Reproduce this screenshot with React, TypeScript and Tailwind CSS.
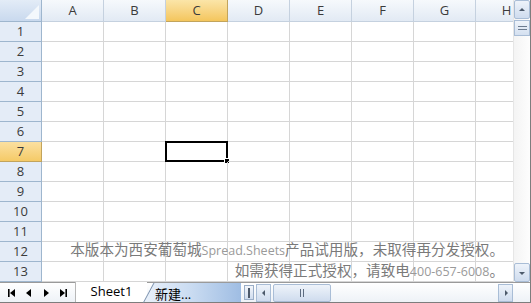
import React from "react";

const cols = ["A", "B", "C", "D", "E", "F", "G", "H"];
const rows = Array.from({ length: 13 }, (_, i) => i + 1);

const SEL_COL = 2;
const SEL_ROW = 7;

function ArrowBtn({ dir }: { dir: "up" | "down" | "left" | "right" }) {
  const pts: Record<string, string> = {
    up: "2,6 5,3 8,6",
    down: "2,4 5,7 8,4",
    left: "6,2 3,5 6,8",
    right: "4,2 7,5 4,8",
  };
  return (
    <svg width="10" height="10" viewBox="0 0 10 10">
      <polygon points={pts[dir]} fill="#4d5a6b" />
    </svg>
  );
}

export default function App() {
  return (
    <div
      className="relative w-[531px] h-[303px] overflow-hidden bg-white flex flex-col border-r border-[#7d7d7d]"
      style={{ fontFamily: '"Open Sans", "Noto Sans", sans-serif' }}
    >
      <div className="flex flex-1 min-h-0">
        {/* --- Grid --- */}
        <div className="w-[513px] overflow-hidden">
          <div className="grid grid-cols-[42px_repeat(8,62px)] grid-rows-[22px_repeat(13,20px)] w-max">
            {/* corner */}
            <div className="relative bg-gradient-to-b from-[#e3ecf7] to-[#c9d9ee] border-r border-b border-[#9eb6ce]">
              <svg className="absolute right-[2px] bottom-[2px]" width="14" height="14" viewBox="0 0 14 14">
                <polygon points="14,0 14,14 0,14" fill="#f4f8fc" />
              </svg>
            </div>
            {cols.map((c, i) => (
              <div
                key={c}
                className={
                  i === SEL_COL
                    ? "flex items-center justify-center text-[13px] text-[#3b3b3b] bg-gradient-to-b from-[#fbe5a8] to-[#f4c65c] border-r border-b border-[#c2a45c]"
                    : "flex items-center justify-center text-[13px] text-[#3b3b3b] bg-gradient-to-b from-[#f6f9fc] to-[#e2eaf4] border-r border-b border-[#c5d1df]"
                }
              >
                {c}
              </div>
            ))}
            {rows.map((r) => (
              <React.Fragment key={r}>
                <div
                  className={
                    r === SEL_ROW
                      ? "flex items-center justify-center text-[13px] text-[#3b3b3b] bg-gradient-to-b from-[#fbe0a0] to-[#f5ca66] border-r border-b border-[#c2a45c]"
                      : "flex items-center justify-center text-[13px] text-[#3b3b3b] bg-[#e4ecf7] border-r border-b border-[#9eb6ce]"
                  }
                >
                  {r}
                </div>
                {cols.map((c, ci) => (
                  <div
                    key={c}
                    className="relative border-r border-b border-[#d6d6d6]"
                  >
                    {r === SEL_ROW && ci === SEL_COL && (
                      <>
                        <div className="absolute -left-px -top-px -right-px -bottom-px border-2 border-black" />
                        <div className="absolute -right-[3px] -bottom-[3px] w-[6px] h-[6px] bg-black border border-white" />
                      </>
                    )}
                  </div>
                ))}
              </React.Fragment>
            ))}
          </div>
        </div>

        {/* --- Vertical scrollbar --- */}
        <div className="w-[17px] flex flex-col bg-gradient-to-r from-[#f4f4f4] to-[#fdfdfd] border-l border-[#e6e6e6]">
          <div className="h-[19px] flex items-center justify-center bg-gradient-to-b from-[#eef3fa] to-[#cfdcee] border border-[#a9bdd6] rounded-[2px]">
            <ArrowBtn dir="up" />
          </div>
          <div className="h-[16px] mt-[1px] flex flex-col items-center justify-center gap-[2px] bg-gradient-to-b from-[#eef3fa] to-[#d4e0f0] border border-[#a9bdd6]">
            <div className="w-[9px] h-px bg-[#6c7b8f]" />
            <div className="w-[9px] h-px bg-[#6c7b8f]" />
          </div>
          <div className="flex-1" />
          <div className="h-[19px] flex items-center justify-center bg-gradient-to-b from-[#eef3fa] to-[#cfdcee] border border-[#a9bdd6] rounded-[2px]">
            <ArrowBtn dir="down" />
          </div>
        </div>
      </div>

      {/* --- Tab bar --- */}
      <div className="h-[21px] flex items-stretch border-t border-[#9a9a9a] border-b border-b-[#7d7d7d] bg-gradient-to-b from-[#ffffff] to-[#eef2f7]">
        <div className="w-[75px] flex items-center justify-around px-[3px] text-black">
          <svg width="10" height="10" viewBox="0 0 10 10">
            <rect x="1" y="1" width="1.6" height="8" fill="#000" />
            <polygon points="8,1 3,5 8,9" fill="#000" />
          </svg>
          <svg width="10" height="10" viewBox="0 0 10 10">
            <polygon points="7,1 2,5 7,9" fill="#000" />
          </svg>
          <svg width="10" height="10" viewBox="0 0 10 10">
            <polygon points="3,1 8,5 3,9" fill="#000" />
          </svg>
          <svg width="10" height="10" viewBox="0 0 10 10">
            <polygon points="2,1 7,5 2,9" fill="#000" />
            <rect x="7.4" y="1" width="1.6" height="8" fill="#000" />
          </svg>
        </div>
        <div className="w-[72px] flex items-center justify-center bg-white border-l border-[#b7b7b7] text-[13px] text-black -mt-px">
          Sheet1
        </div>
        <div className="relative w-[98px] -ml-[4px]">
          <div className="absolute inset-0 bg-gradient-to-r from-[#eaf1fa] via-[#c9dbf1] to-[#9fbde3] [clip-path:polygon(10px_0,100%_0,100%_100%,0_100%)]" />
          <svg className="absolute left-0 top-0" width="12" height="20" viewBox="0 0 12 20">
            <line x1="0.5" y1="19.5" x2="11" y2="0" stroke="#7f93ad" strokeWidth="1" />
          </svg>
          <span
            className="absolute left-[12px] top-[1px] text-[13px] text-black"
            style={{ fontFamily: '"Noto Sans CJK SC", sans-serif' }}
          >
            新建
            <span style={{ fontFamily: '"Open Sans", sans-serif' }}>...</span>
          </span>
        </div>
        <div className="w-[10px] ml-[3px] my-[2px] flex items-center justify-center bg-gradient-to-b from-[#f3f6fb] to-[#cfdcee] border border-[#9aaec8]">
          <div className="w-[2px] h-[10px] bg-[#4d5a6b]" />
        </div>
        <div className="flex-1 flex items-center ml-[2px]">
          <div className="w-[15px] h-[18px] flex items-center justify-center bg-gradient-to-b from-[#eef3fa] to-[#cfdcee] border border-[#a9bdd6]">
            <ArrowBtn dir="left" />
          </div>
          <div className="w-[58px] h-[18px] ml-[2px] flex items-center justify-center gap-[2px] bg-gradient-to-b from-[#eef3fa] to-[#cfdcee] border border-[#a9bdd6] rounded-[2px]">
            <div className="w-px h-[8px] bg-[#5c6b80]" />
            <div className="w-px h-[8px] bg-[#5c6b80]" />
          </div>
          <div className="flex-1" />
          <div className="w-[15px] h-[18px] mr-[1px] flex items-center justify-center bg-gradient-to-b from-[#eef3fa] to-[#cfdcee] border border-[#a9bdd6]">
            <ArrowBtn dir="right" />
          </div>
        </div>
        <div className="w-[16px]" />
      </div>

      {/* --- Watermark --- */}
      <div
        className="absolute right-[26px] top-[239px] flex flex-col items-end text-[14.6px] leading-[19px] text-[#7a7a7a] pointer-events-none"
        style={{ fontFamily: '"Noto Sans CJK SC", sans-serif' }}
      >
        <div>
          本版本为西安葡萄城
          <span className="text-[12.5px] text-[#9a9a9a]" style={{ fontFamily: '"Open Sans", sans-serif' }}>
            Spread.Sheets
          </span>
          产品试用版，未取得再分发授权。
        </div>
        <div>
          如需获得正式授权，请致电
          <span className="text-[12.5px] text-[#9a9a9a]" style={{ fontFamily: '"Open Sans", sans-serif' }}>
            400-657-6008
          </span>
          。
        </div>
      </div>
    </div>
  );
}
